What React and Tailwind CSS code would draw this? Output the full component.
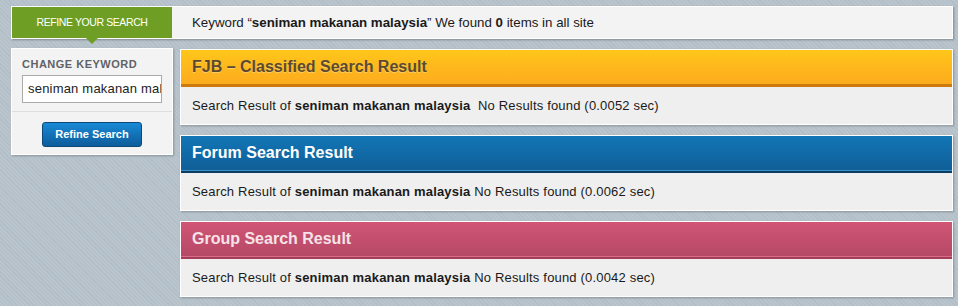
import React from "react";

function Panel({ title, headerCls, titleCls, lineCls, time, extraSpace }) {
  return (
    <div className="border border-white bg-[#efefef] shadow-[1px_1px_2px_rgba(0,0,0,0.25)]">
      <div className={`h-[34px] flex items-center px-[11px] ${headerCls}`}>
        <span className={`text-[16px] font-bold ${titleCls}`}>{title}</span>
      </div>
      <div className={`h-[3px] ${lineCls}`} />
      <div className="h-[37px] flex items-center px-[11px] text-[13px] tracking-[0.18px] text-[#1a1a1a]">
        <span>
          Search Result of <b>seniman makanan malaysia</b>
          {extraSpace ? "\u00a0 " : " "}No Results found ({time} sec)
        </span>
      </div>
    </div>
  );
}

export default function App() {
  return (
    <div
      className="w-[958px] h-[306px] bg-[#b4c0c9] bg-[repeating-linear-gradient(45deg,#b2bec7_0px,#b2bec7_1px,#b9c4cc_1px,#b9c4cc_3px)] pt-[6px] pl-[11px] pr-[5px] font-['Liberation_Sans',Arial,sans-serif]"
    >
      <div className="flex h-[33px] border border-white bg-[#f3f3f3] shadow-[1px_1px_2px_rgba(0,0,0,0.3)]">
        <div className="relative w-[160px] bg-[#6e9f24] flex items-center justify-center text-white text-[10.5px] tracking-[-0.4px]">
          REFINE YOUR SEARCH
          <div className="absolute left-[74px] top-[31px] w-0 h-0 border-l-[6px] border-r-[6px] border-t-[6px] border-l-transparent border-r-transparent border-t-[#6e9f24]" />
        </div>
        <div className="flex items-center pl-[20px] text-[13.3px] text-[#1a1a1a]">
          <span>
            Keyword “<b>seniman makanan malaysia</b>” We found <b>0</b> items in all site
          </span>
        </div>
      </div>

      <div className="flex gap-[7px] mt-[9px]">
        <div className="w-[162px] shrink-0 self-start h-[107px] bg-[#f3f3f3] border border-white shadow-[1px_1px_2px_rgba(0,0,0,0.25)] flex flex-col">
          <div className="px-[10px] pt-[9px] pb-[8px] border-b border-[#dedede]">
            <div className="text-[11px] font-bold tracking-[0.5px] text-[#5f6368] leading-[12px]">
              CHANGE KEYWORD
            </div>
            <div className="mt-[5px] w-[140px] h-[28px] border border-[#a9a9a9] bg-white flex items-center px-[5px] overflow-hidden whitespace-nowrap text-[13px] tracking-[0.2px] text-[#222]">
              seniman makanan malaysia
            </div>
          </div>
          <div className="flex justify-center pt-[10px]">
            <div className="w-[100px] h-[25px] rounded-[3px] border border-[#0b4a78] bg-gradient-to-b from-[#1a8ad6] to-[#0c5c9a] flex items-center justify-center text-white text-[11px] font-bold">
              Refine Search
            </div>
          </div>
        </div>

        <div className="flex-1 flex flex-col gap-[10px] mt-[1px]">
          <Panel
            title="FJB – Classified Search Result"
            headerCls="bg-gradient-to-b from-[#ffc61a] to-[#fdab1e]"
            titleCls="text-[#5b4a30] [text-shadow:0_1px_0_rgba(255,255,255,0.35)]"
            lineCls="bg-[#cf7a0d]"
            time="0.0052"
            extraSpace
          />
          <Panel
            title="Forum Search Result"
            headerCls="bg-gradient-to-b from-[#1276b6] to-[#105f98]"
            titleCls="text-white"
            lineCls="bg-[#0b3d62] border-t border-[#3b8fc7]"
            time="0.0062"
          />
          <Panel
            title="Group Search Result"
            headerCls="bg-gradient-to-b from-[#d15575] to-[#b54966]"
            titleCls="text-[#f6e3e9]"
            lineCls="bg-[#a53d5a] border-t border-[#d66c87]"
            time="0.0042"
          />
        </div>
      </div>
    </div>
  );
}
